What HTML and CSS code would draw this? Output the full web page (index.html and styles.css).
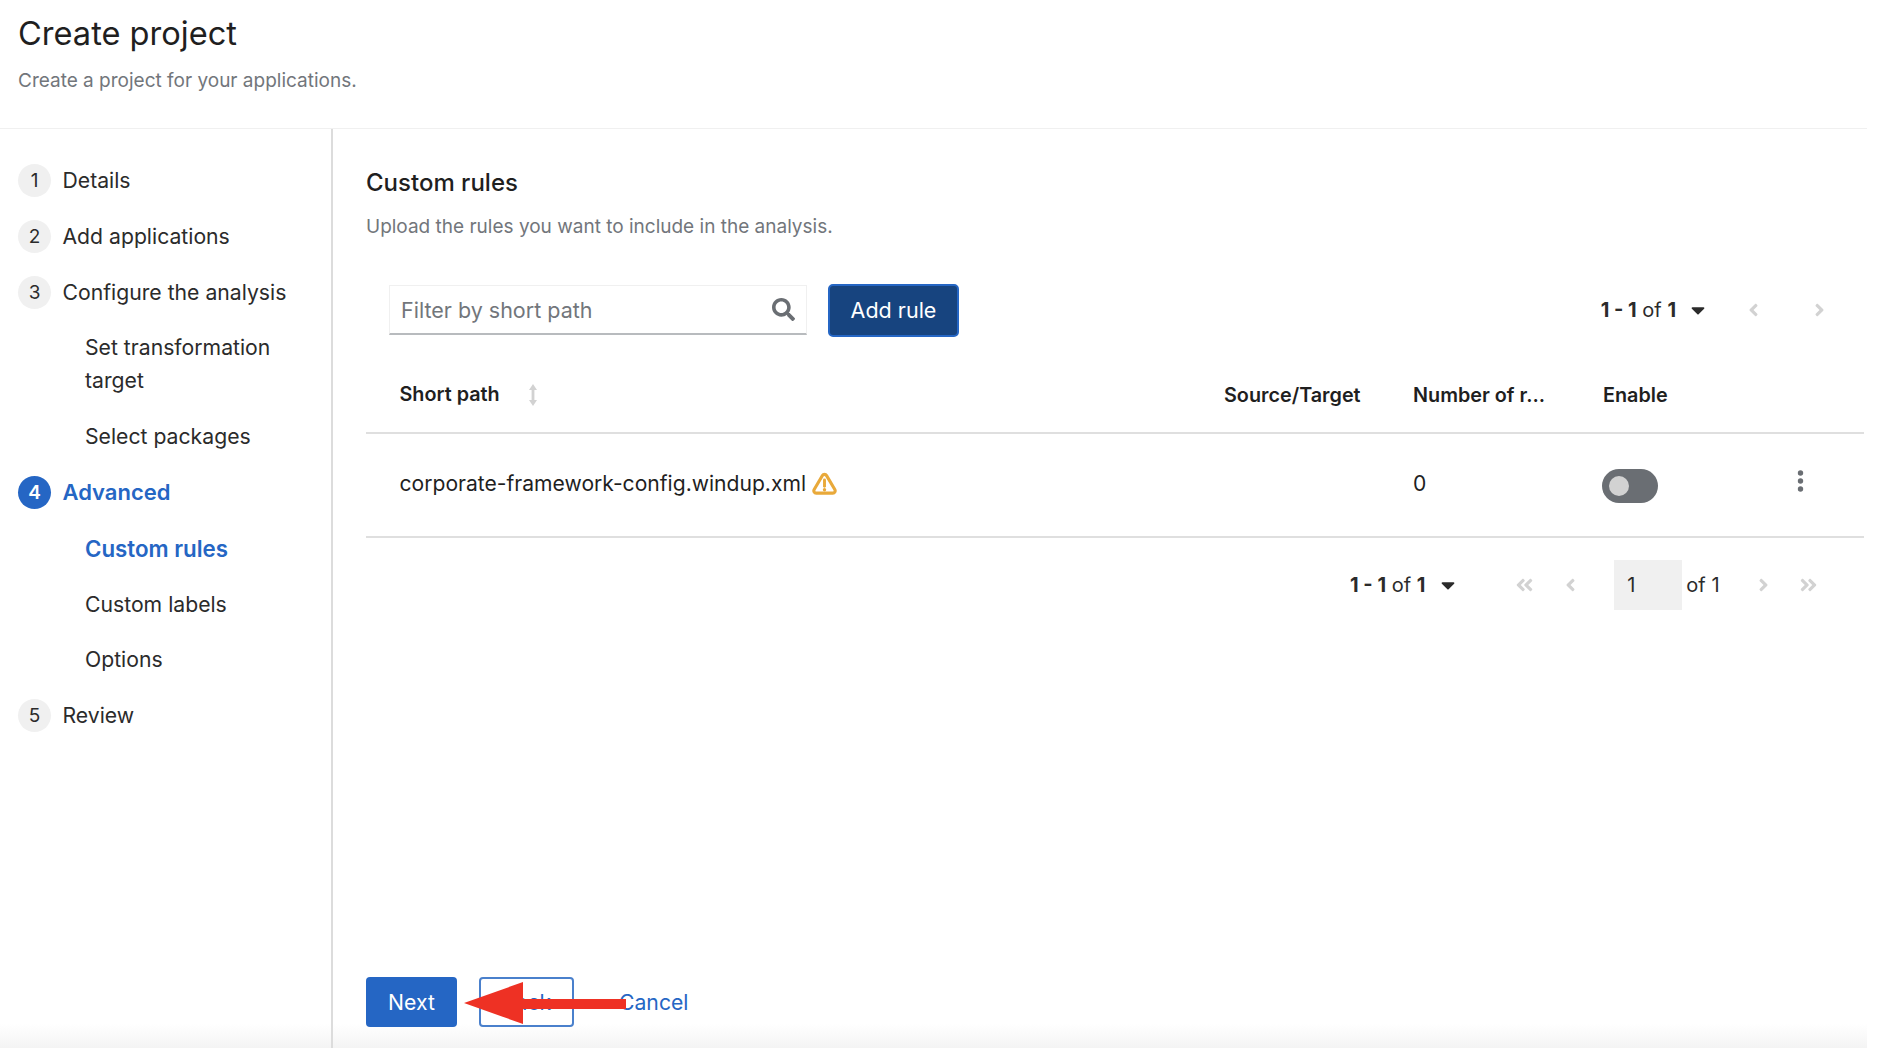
FILE: index.html

```html
<!DOCTYPE html>
<html>
<head>
    <meta charset="utf-8">
    <meta name="viewport" content="width=device-width, initial-scale=1.0">
    <title>Create project</title>
    <link rel="stylesheet" href="styles.css">
</head>
<body>
    <svg class="iconDefs" aria-hidden="true">
        <symbol id="angleLeft" viewBox="0 0 256 512"><path d="M31.7 239l136-136c9.4-9.4 24.6-9.4 33.9 0l22.6 22.6c9.4 9.4 9.4 24.6 0 33.9L127.9 256l96.4 96.4c9.4 9.4 9.4 24.6 0 33.9L201.7 409c-9.4 9.4-24.6 9.4-33.9 0l-136-136c-9.5-9.4-9.5-24.6-.1-34z"/></symbol>
        <symbol id="angleRight" viewBox="0 0 256 512"><path d="M224.3 273l-136 136c-9.4 9.4-24.6 9.4-33.9 0l-22.6-22.6c-9.4-9.4-9.4-24.6 0-33.9l96.4-96.4-96.4-96.4c-9.4-9.4-9.4-24.6 0-33.9L54.3 103c9.4-9.4 24.6-9.4 33.9 0l136 136c9.5 9.4 9.5 24.6.1 34z"/></symbol>
        <symbol id="doubleLeft" viewBox="0 0 448 512"><path d="M223.7 239l136-136c9.4-9.4 24.6-9.4 33.9 0l22.6 22.6c9.4 9.4 9.4 24.6 0 33.9L319.9 256l96.4 96.4c9.4 9.4 9.4 24.6 0 33.9L393.7 409c-9.4 9.4-24.6 9.4-33.9 0l-136-136c-9.5-9.4-9.5-24.6-.1-34zm-192 34l136 136c9.4 9.4 24.6 9.4 33.9 0l22.6-22.6c9.4-9.4 9.4-24.6 0-33.9L127.9 256l96.4-96.4c9.4-9.4 9.4-24.6 0-33.9L201.7 103c-9.4-9.4-24.6-9.4-33.9 0l-136 136c-9.5 9.4-9.5 24.6-.1 34z"/></symbol>
        <symbol id="doubleRight" viewBox="0 0 448 512"><path d="M224.3 273l-136 136c-9.4 9.4-24.6 9.4-33.9 0l-22.6-22.6c-9.4-9.4-9.4-24.6 0-33.9l96.4-96.4-96.4-96.4c-9.4-9.4-9.4-24.6 0-33.9L54.3 103c9.4-9.4 24.6-9.4 33.9 0l136 136c9.5 9.4 9.5 24.6.1 34zm192-34l-136-136c-9.4-9.4-24.6-9.4-33.9 0l-22.6 22.6c-9.4 9.4-9.4 24.6 0 33.9l96.4 96.4-96.4 96.4c-9.4 9.4-9.4 24.6 0 33.9l22.6 22.6c9.4 9.4 24.6 9.4 33.9 0l136-136c9.4-9.2 9.4-24.4 0-33.8z"/></symbol>
        <symbol id="caretDown" viewBox="0 0 320 512"><path d="M31.3 192h257.3c17.8 0 26.7 21.5 14.1 34.1L174.1 354.8c-7.8 7.8-20.5 7.8-28.3 0L17.2 226.1C4.6 213.5 13.5 192 31.3 192z"/></symbol>
    </svg>

    <div class="page">
        <header class="pageHeader">
            <h1>Create project</h1>
            <p>Create a project for your applications.</p>
        </header>

        <div class="wizard">
            <nav class="steps">
                <div class="step"><span class="stepNum">1</span>Details</div>
                <div class="step"><span class="stepNum">2</span>Add applications</div>
                <div class="step"><span class="stepNum">3</span>Configure the analysis</div>
                <div class="subStep">Set transformation target</div>
                <div class="subStep">Select packages</div>
                <div class="step current"><span class="stepNum">4</span>Advanced</div>
                <div class="subStep current">Custom rules</div>
                <div class="subStep">Custom labels</div>
                <div class="subStep">Options</div>
                <div class="step"><span class="stepNum">5</span>Review</div>
            </nav>

            <main class="content">
                <div class="contentBody">
                    <h2>Custom rules</h2>
                    <p class="lead">Upload the rules you want to include in the analysis.</p>

                    <div class="toolbar">
                        <div class="filter">
                            <span class="placeholder">Filter by short path</span>
                            <svg class="searchIcon" viewBox="0 0 512 512"><path d="M505 442.7L405.3 343c-4.5-4.5-10.6-7-17-7H372c27.6-35.3 44-79.7 44-128C416 93.1 322.9 0 208 0S0 93.1 0 208s93.1 208 208 208c48.3 0 92.7-16.4 128-44v16.3c0 6.4 2.5 12.5 7 17l99.7 99.7c9.4 9.4 24.6 9.4 33.9 0l28.3-28.3c9.4-9.4 9.4-24.6.1-34zM208 336c-70.7 0-128-57.2-128-128 0-70.7 57.2-128 128-128 70.7 0 128 57.2 128 128 0 70.7-57.2 128-128 128z"/></svg>
                        </div>
                        <button class="addRule">Add rule</button>
                        <div class="topPager">
                            <span class="range"><b>1 - 1</b> of <b>1</b></span>
                            <svg class="caret"><use href="#caretDown"/></svg>
                            <svg class="angle first"><use href="#angleLeft"/></svg>
                            <svg class="angle"><use href="#angleRight"/></svg>
                        </div>
                    </div>

                    <table class="rules">
                        <colgroup>
                            <col class="colPath"><col class="colSource"><col class="colNumber"><col class="colEnable"><col class="colActions">
                        </colgroup>
                        <thead>
                            <tr>
                                <th class="pathCell">Short path
                                    <svg class="sortIcon" viewBox="0 0 10 24"><path d="M5 1L1 7h2.6v10H1l4 6 4-6H6.4V7H9z"/></svg>
                                </th>
                                <th>Source/Target</th>
                                <th>Number of r...</th>
                                <th>Enable</th>
                                <th></th>
                            </tr>
                        </thead>
                        <tbody>
                            <tr>
                                <td class="pathCell">corporate-framework-config.windup.xml
                                    <svg class="warnIcon" viewBox="0 0 24 22"><path d="M12 2.2c-.9 0-1.6.5-2 1.2L2.1 16.8c-.9 1.5.2 3.4 1.9 3.4h16c1.7 0 2.8-1.9 1.9-3.4L14 3.4c-.4-.7-1.1-1.2-2-1.2z" fill="none" stroke="#e9a93a" stroke-width="3" stroke-linejoin="round"/><path d="M12 7.6v6" stroke="#e9a93a" stroke-width="2.8" stroke-linecap="round"/><circle cx="12" cy="17" r="1.6" fill="#e9a93a"/></svg>
                                </td>
                                <td></td>
                                <td>0</td>
                                <td><span class="toggle"><span class="knob"></span></span></td>
                                <td>
                                    <svg class="kebab" viewBox="0 0 6 24"><circle cx="3" cy="4" r="2.7"/><circle cx="3" cy="12" r="2.7"/><circle cx="3" cy="20" r="2.7"/></svg>
                                </td>
                            </tr>
                        </tbody>
                    </table>

                    <div class="bottomPager">
                        <span class="range"><b>1 - 1</b> of <b>1</b></span>
                        <svg class="caret"><use href="#caretDown"/></svg>
                        <svg class="double first"><use href="#doubleLeft"/></svg>
                        <svg class="angle second"><use href="#angleLeft"/></svg>
                        <span class="pageBox">1</span>
                        <span class="ofText">of 1</span>
                        <svg class="angle third"><use href="#angleRight"/></svg>
                        <svg class="double fourth"><use href="#doubleRight"/></svg>
                    </div>
                </div>

                <footer class="actions">
                    <button class="btnNext">Next</button>
                    <button class="btnBack">Back</button>
                    <button class="btnCancel">Cancel</button>
                </footer>
            </main>
        </div>

        <!-- red annotation arrow pasted over the footer -->
        <svg class="arrow" viewBox="0 0 162 44"><path d="M0 22L59 1v17h103v10H59v15z"/></svg>
    </div>
</body>
</html>
```

FILE: styles.css

```css
* {
    box-sizing: border-box;
}

body {
    margin: 0;
    height: 1054px;
    background-color: #ffffff;
    color: #1f1f1f;
    font-family: Inter, 'Liberation Sans', sans-serif;
    overflow: hidden;
}

.iconDefs {
    display: none;
}

.page {
    position: relative;
    width: 1867px;
    height: 1048px;
    display: flex;
    flex-direction: column;
    background: linear-gradient(to bottom, #ffffff 1024px, #f4f4f4 1048px);
}

.pageHeader {
    height: 129px;
    padding: 14px 18px 0;
    border-bottom: 1px solid #f0f0f0;
}
.pageHeader h1 {
    margin: 0;
    font-size: 32.6px;
    line-height: 38px;
    font-weight: 400;
}
.pageHeader p {
    margin: 16px 0 0;
    font-size: 19px;
    line-height: 26px;
    color: #72767b;
}

.wizard {
    flex: 1;
    display: flex;
    min-height: 0;
}

/* left column with the steps */
.steps {
    width: 333px;
    flex-shrink: 0;
    padding: 35px 0 0 18px;
    border-right: 2px solid #dcdcdc;
    font-size: 21.2px;
    line-height: 33px;
}
.step {
    display: flex;
    align-items: center;
    gap: 11.5px;
    height: 33px;
    margin-bottom: 22.8px;
    color: #2b2b2b;
}
.stepNum {
    width: 33px;
    height: 33px;
    border-radius: 50%;
    background-color: #f0f0f0;
    display: flex;
    justify-content: center;
    align-items: center;
    font-size: 19px;
}
.step.current {
    color: #2566c4;
    font-size: 22px;
    font-weight: 600;
}
.step.current .stepNum {
    background-color: #2566c4;
    color: #ffffff;
}
.subStep {
    width: 210px;
    margin: 0 0 22.8px 67px;
    color: #2b2b2b;
}
.subStep.current {
    color: #2566c4;
    font-size: 22.3px;
    font-weight: 600;
}

/* right column */
.content {
    flex: 1;
    display: flex;
    flex-direction: column;
    padding: 0 3px 21px 33px;
    min-width: 0;
}
.contentBody {
    flex: 1;
}
.content h2 {
    margin: 38px 0 0;
    font-size: 24px;
    line-height: 32px;
    font-weight: 500;
}
.lead {
    margin: 15px 0 0;
    font-size: 19px;
    line-height: 26px;
    color: #72767b;
}

.toolbar {
    display: flex;
    align-items: center;
    margin-top: 44px;
    height: 52px;
    padding-left: 23px;
}
.filter {
    width: 418px;
    height: 50px;
    display: flex;
    align-items: center;
    justify-content: space-between;
    padding: 0 11px 0 11px;
    border: 1px solid #f0f0f0;
    border-bottom: 2px solid #b8bbbe;
}
.placeholder {
    font-size: 21.5px;
    color: #72767b;
}
.searchIcon {
    width: 23px;
    height: 23px;
    fill: #6a6e73;
}
.addRule {
    margin-left: 21px;
    width: 131px;
    height: 53px;
    background-color: #17447f;
    border: 2px solid #2566c4;
    border-radius: 5px;
    color: #ffffff;
    font-family: inherit;
    font-size: 21.5px;
}
.topPager {
    margin-left: auto;
    display: flex;
    align-items: center;
    padding-right: 39px;
}

.range {
    font-size: 20px;
    color: #2b2b2b;
}
.range b {
    font-weight: 700;
}
.caret {
    width: 14px;
    height: 22px;
    margin-left: 15px;
    fill: #2b2b2b;
}
.angle {
    width: 11px;
    height: 20px;
    fill: #d2d2d2;
}
.double {
    width: 19px;
    height: 20px;
    fill: #d2d2d2;
}
.angle.first {
    margin-left: 43px;
    margin-right: 55px;
}

.rules {
    width: 1498px;
    margin-top: 23px;
    table-layout: fixed;
    border-collapse: collapse;
}
.colPath { width: 858px; }
.colSource { width: 189px; }
.colNumber { width: 190px; }
.colEnable { width: 197px; }
.rules th {
    height: 74px;
    padding: 0 0 2px;
    text-align: left;
    font-size: 19.8px;
    font-weight: 600;
    border-bottom: 2px solid #dfdfdf;
    vertical-align: middle;
}
.rules td {
    height: 104px;
    padding: 0 0 3px;
    font-size: 21.1px;
    border-bottom: 2px solid #dfdfdf;
    vertical-align: middle;
}
.pathCell {
    padding-left: 33.5px !important;
}
.sortIcon {
    width: 12px;
    height: 24px;
    margin-left: 22px;
    fill: #d2d2d2;
    vertical-align: middle;
}
.warnIcon {
    width: 25px;
    height: 23px;
    vertical-align: -4px;
}
.toggle {
    display: block;
    width: 56px;
    height: 34px;
    margin: 5px 0 0 -1px;
    padding: 7px 0 0 7px;
    border-radius: 17px;
    background-color: #6a6e73;
}
.knob {
    display: block;
    width: 20px;
    height: 20px;
    border-radius: 50%;
    background-color: #d2d2d2;
}
.kebab {
    display: block;
    width: 7px;
    height: 24px;
    margin: -6px 0 0 -3px;
    fill: #6a6e73;
}

.bottomPager {
    display: flex;
    align-items: center;
    height: 50px;
    margin-top: 22px;
    padding-left: 984px;
}
.bottomPager .caret {
    margin-left: 16px;
}
.double.first {
    margin-left: 60px;
}
.angle.second {
    margin-left: 31px;
}
.pageBox {
    width: 68px;
    height: 50px;
    margin-left: 38px;
    padding-left: 13px;
    background-color: #f0f0f0;
    font-size: 20px;
    line-height: 50px;
    color: #2b2b2b;
}
.ofText {
    margin-left: 4px;
    font-size: 20px;
    color: #2b2b2b;
}
.angle.third {
    margin-left: 38px;
}
.double.fourth {
    margin-left: 30px;
}

.actions {
    display: flex;
    align-items: center;
    height: 50px;
}
.actions button {
    height: 50px;
    border-radius: 4px;
    font-family: inherit;
    font-size: 21.2px;
}
.btnNext {
    width: 91px;
    background-color: #2566c4;
    border: none;
    color: #ffffff;
}
.btnBack {
    width: 95px;
    margin-left: 22px;
    background-color: #ffffff;
    border: 2px solid #4a80cc;
    color: #2566c4;
}
.btnCancel {
    margin-left: 24px;
    padding: 0 21px;
    background: none;
    border: none;
    color: #2566c4;
}

.arrow {
    position: absolute;
    left: 464px;
    top: 981px;
    width: 162px;
    height: 44px;
    fill: #ee3124;
}
```
